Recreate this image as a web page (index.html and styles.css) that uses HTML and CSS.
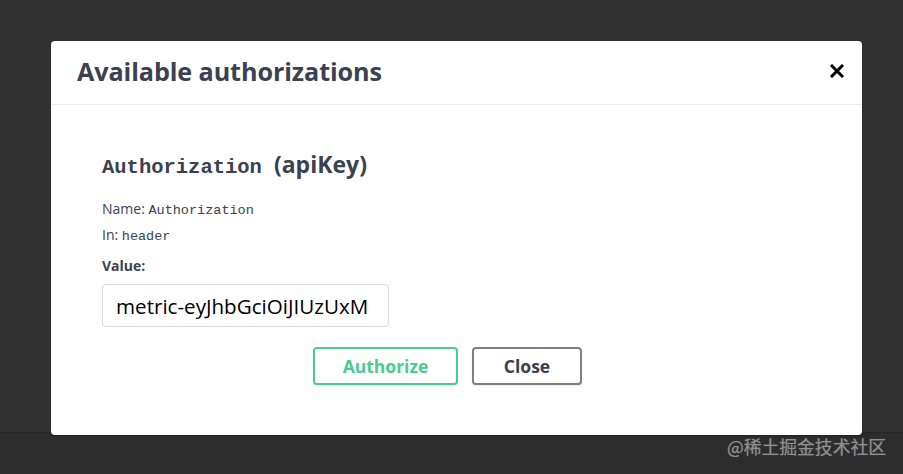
FILE: index.html
```html
<!DOCTYPE html>
<html lang="en">
<head>
<meta charset="utf-8">
<title>Available authorizations</title>
<link rel="stylesheet" href="styles.css">
</head>
<body>
<div class="backdrop">
  <div class="modal">
    <div class="modal-header">
      <h3 class="modal-title">Available authorizations</h3>
      <button class="close-modal" aria-label="Close">
        <svg width="14" height="14" viewBox="0 0 14 14"><path d="M2 2 L12 12 M12 2 L2 12" stroke="#000" stroke-width="3" stroke-linecap="square"/></svg>
      </button>
    </div>
    <div class="modal-body">
      <h4 class="auth-title"><code>Authorization</code>&nbsp;<span class="type">(apiKey)</span></h4>
      <p class="meta">Name: <code>Authorization</code></p>
      <p class="meta">In: <code>header</code></p>
      <label class="value-label">Value:</label>
      <div class="input-box">metric-eyJhbGciOiJIUzUxM</div>
      <div class="btn-wrapper">
        <button class="btn authorize">Authorize</button>
        <button class="btn close">Close</button>
      </div>
    </div>
  </div>
  <div class="footer-strip">
    <span class="watermark">@稀土掘金技术社区</span>
  </div>
</div>
</body>
</html>
```
FILE: styles.css
```css
* { box-sizing: border-box; }
html, body { margin: 0; padding: 0; }
body {
  width: 903px;
  height: 474px;
  overflow: hidden;
  background: #323232;
  font-family: "Open Sans", "Noto Sans", sans-serif;
  color: #3b4151;
}
.backdrop {
  display: flex;
  flex-direction: column;
  height: 474px;
  padding-top: 41px;
}
.modal {
  position: relative;
  z-index: 2;
  margin-left: 51px;
  width: 811px;
  height: 394px;
  background: #fff;
  border-radius: 4px;
  box-shadow: 0 1px 3px rgba(0,0,0,0.3);
}
.modal-header {
  height: 64px;
  border-bottom: 1px solid #ebebeb;
  display: flex;
  align-items: center;
  justify-content: space-between;
  padding: 0 18px 0 26px;
}
.modal-title {
  margin: 0;
  font-size: 25.2px;
  font-weight: 700;
  letter-spacing: -0.1px;
  color: #3b4151;
  margin-top: -3px;
}
.close-modal {
  background: none;
  border: 0;
  padding: 0;
  width: 14px;
  height: 14px;
  margin-top: -4px;
  display: flex;
}
.modal-body {
  padding: 45px 51px 0 51px;
}
.auth-title {
  margin: 0;
  height: 28px;
  font-size: 23px;
  font-weight: 700;
  line-height: 28px;
  font-family: "Open Sans", sans-serif;
  display: flex;
  align-items: baseline;
}
.auth-title code {
  font-family: "Liberation Mono", monospace;
  font-size: 20.5px;
  font-weight: 700;
}
.auth-title .type { margin-left: 6px; }
.meta {
  margin: 0;
  height: 26px;
  font-size: 14px;
  line-height: 26px;
}
.auth-title + .meta { margin-top: 18px; }
.meta code {
  font-family: "Liberation Mono", monospace;
  font-size: 13.5px;
  line-height: 1;
}
.value-label {
  display: block;
  margin-top: 8px;
  height: 20px;
  font-size: 14px;
  font-weight: 700;
  line-height: 20px;
}
.input-box {
  margin-top: 8px;
  width: 287px;
  height: 43px;
  border: 1px solid #d9d9d9;
  border-radius: 4px;
  padding: 0 13px;
  display: flex;
  align-items: center;
  font-size: 20.6px;
  color: #000;
  white-space: nowrap;
  overflow: hidden;
}
.btn-wrapper {
  display: flex;
  justify-content: center;
  gap: 14px;
  margin-top: 20px;
  padding-right: 18px;
}
.btn {
  height: 38px;
  border-radius: 4px;
  background: #fff;
  font-family: "Open Sans", sans-serif;
  font-size: 17.5px;
  font-weight: 700;
  padding: 0;
  box-shadow: 0 1px 2px rgba(0,0,0,0.1);
}
.authorize {
  width: 145px;
  border: 2px solid #49cc90;
  color: #49cc90;
}
.close {
  width: 110px;
  border: 2px solid #808080;
  color: #3b4151;
}
.footer-strip {
  margin-top: -3px;
  flex: 1;
  background: #2d2d2d;
  border-top: 1px solid #262626;
  position: relative;
  z-index: 1;
  display: flex;
  justify-content: flex-end;
  padding-right: 17px;
}
.watermark {
  margin-top: 0;
  font-family: "Noto Sans CJK SC", sans-serif;
  font-size: 17.8px;
  color: #8f8f8f;
  text-shadow: 0 0 1px rgba(255,255,255,0.3);
}
```
